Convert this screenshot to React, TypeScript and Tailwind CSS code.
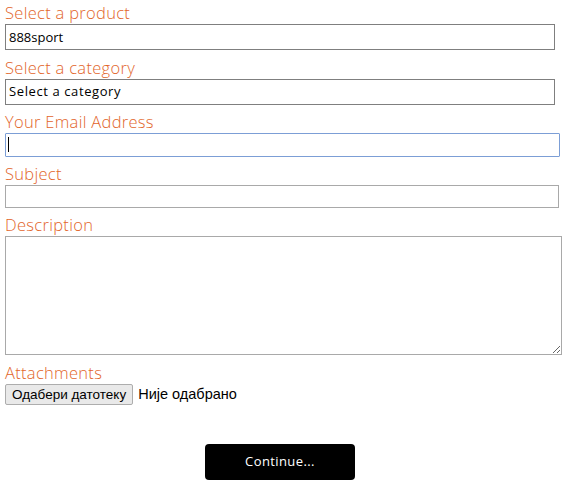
import React from 'react';

const labelCls = "block text-[16.5px] leading-[20px] text-[#e2652a] font-light tracking-[0.3px]";
const fontStack = { fontFamily: '"Open Sans", "Lato", "DejaVu Sans", sans-serif' };
const sysFont = { fontFamily: '"Liberation Sans", Arial, sans-serif' };

export default function App() {
  return (
    <div className="bg-white min-h-[487px] px-[5px] pt-[3px]" style={fontStack}>
      {/* product */}
      <label className={labelCls}>Select a product</label>
      <input
        readOnly
        value="888sport"
        className="mt-[1px] block w-[550px] h-[26px] border border-[#7f7f7f] px-[3px] text-[13px] text-black outline-none"
      />

      {/* category */}
      <label className={`${labelCls} mt-[8px]`}>Select a category</label>
      <div className="mt-[1px] w-[550px] h-[26px] border border-[#7f7f7f] px-[3px] flex items-center text-[13px] tracking-[0.6px] text-black">
        Select a category
      </div>

      {/* email */}
      <label className={`${labelCls} mt-[7px]`}>Your Email Address</label>
      <div className="relative mt-[1px] w-[555px]">
        <input className="block w-full h-[24px] border border-[#7c9ed6] rounded-[1px] outline-none px-[3px]" />
        <span className="absolute left-[3px] top-[4px] w-[1px] h-[15px] bg-black" />
      </div>

      {/* subject */}
      <label className={`${labelCls} mt-[7px]`}>Subject</label>
      <input className="mt-[1px] block w-[554px] h-[23px] border border-[#a9a9a9] outline-none" />

      {/* description */}
      <label className={`${labelCls} mt-[7px]`}>Description</label>
      <textarea className="mt-[1px] block w-[557px] h-[119px] border border-[#a9a9a9] outline-none resize" />

      {/* attachments */}
      <label className={`${labelCls} mt-[8px]`}>Attachments</label>
      <div className="mt-[1px] h-[21px] flex items-center gap-[5px]">
        <button
          className="h-[21px] px-[6px] border border-[#adadad] bg-[#e9e9e9] rounded-[2px] text-[13.5px] text-black leading-none"
          style={sysFont}
        >
          Одабери датотеку
        </button>
        <span className="text-[14.5px] leading-none text-black" style={sysFont}>
          Није одабрано
        </span>
      </div>

      {/* submit */}
      <div className="flex justify-center mt-[39px]">
        <button className="w-[150px] h-[36px] bg-black rounded-[4px] text-white text-[13px] tracking-[0.4px] -translate-x-[2px]">
          Continue...
        </button>
      </div>
    </div>
  );
}
